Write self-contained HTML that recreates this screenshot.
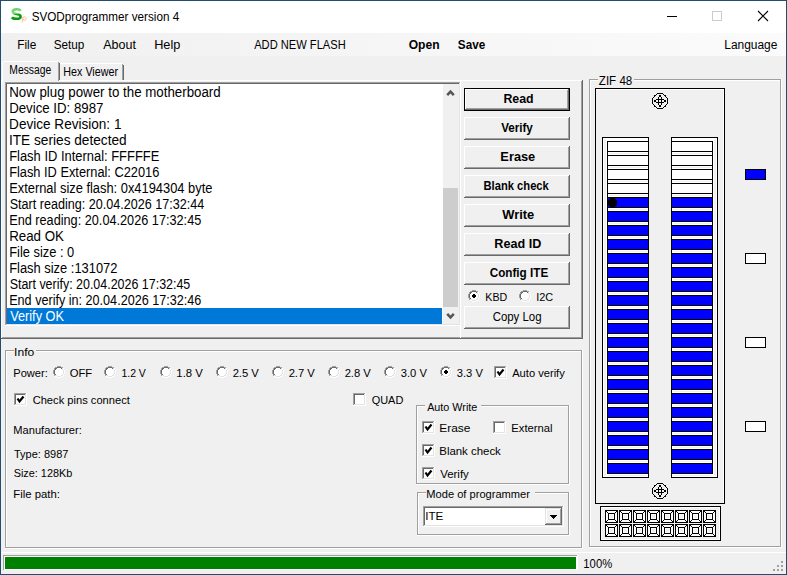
<!DOCTYPE html>
<html><head><meta charset="utf-8"><title>SVODprogrammer version 4</title><style>
html,body{margin:0;padding:0;background:#f0f0f0;overflow:hidden;width:787px;height:575px}
svg{display:block}
text{font-family:"Liberation Sans",sans-serif}
</style></head><body>
<svg width="787" height="575" viewBox="0 0 787 575" shape-rendering="crispEdges">
<rect x="0" y="0" width="787" height="575" fill="#f0f0f0" />
<rect x="0" y="0" width="787" height="33" fill="#ffffff" />
<defs><linearGradient id="mg" x1="0" x2="1" y1="0" y2="0"><stop offset="0" stop-color="#f0f0f0"/><stop offset="1" stop-color="#fbfbfb"/></linearGradient></defs>
<rect x="1" y="33" width="785" height="23" fill="url(#mg)" />
<rect x="0" y="0" width="787" height="1" fill="#1f4e6e" />
<rect x="0" y="574" width="787" height="1" fill="#1f4e6e" />
<rect x="0" y="0" width="1" height="575" fill="#1f4e6e" />
<rect x="786" y="0" width="1" height="575" fill="#1f4e6e" />
<defs><linearGradient id="sg" gradientUnits="userSpaceOnUse" x1="0" x2="0" y1="8" y2="20"><stop offset="0" stop-color="#66d166"/><stop offset="0.45" stop-color="#7fdc7f"/><stop offset="0.55" stop-color="#109a10"/><stop offset="1" stop-color="#0a9a0a"/></linearGradient></defs>
<path d="M20.7 10.9 C19.9 9.7 18.4 9.3 16.7 9.3 C14.1 9.3 12.6 10.2 12.8 11.8 C13 13.3 14.7 13.6 16.7 14 C19 14.4 20.8 14.9 20.6 16.8 C20.4 18.4 18.5 18.8 16.5 18.8 C14.3 18.8 12.7 18.4 11.9 17.2" stroke="url(#sg)" stroke-width="2.6" fill="none" shape-rendering="geometricPrecision"/>
<g shape-rendering="geometricPrecision" stroke="#f9c69a" stroke-width="1" fill="none"><path d="M23.2 16.8 L22.2 22.5"/><ellipse cx="24.4" cy="18.6" rx="1.7" ry="1.8"/></g>
<text x="31.67" y="21" font-size="12" font-weight="400" fill="#000" textLength="147.49" lengthAdjust="spacingAndGlyphs">SVODprogrammer version 4</text>
<rect x="667" y="16" width="10" height="1" fill="#000" />
<rect x="712.5" y="11.5" width="9" height="9" fill="none" stroke="#cccccc" stroke-width="1"/>
<path d="M758 11 L768 21 M768 11 L758 21" stroke="#000" stroke-width="1.1" fill="none" shape-rendering="geometricPrecision"/>
<text x="17.25" y="49" font-size="12" font-weight="400" fill="#000" textLength="19.10" lengthAdjust="spacingAndGlyphs">File</text>
<text x="53.67" y="49" font-size="12" font-weight="400" fill="#000" textLength="30.64" lengthAdjust="spacingAndGlyphs">Setup</text>
<text x="103.20" y="49" font-size="12" font-weight="400" fill="#000" textLength="32.70" lengthAdjust="spacingAndGlyphs">About</text>
<text x="154.18" y="49" font-size="12" font-weight="400" fill="#000" textLength="26.15" lengthAdjust="spacingAndGlyphs">Help</text>
<text x="254.20" y="49" font-size="12" font-weight="400" fill="#000" textLength="91.53" lengthAdjust="spacingAndGlyphs">ADD NEW FLASH</text>
<text x="724.25" y="49" font-size="12" font-weight="400" fill="#000" textLength="53.08" lengthAdjust="spacingAndGlyphs">Language</text>
<text x="408.72" y="49" font-size="12" font-weight="700" fill="#000" textLength="30.81" lengthAdjust="spacingAndGlyphs">Open</text>
<text x="457.85" y="49" font-size="12" font-weight="700" fill="#000" textLength="27.37" lengthAdjust="spacingAndGlyphs">Save</text>
<rect x="2" y="61" width="57" height="21" fill="#f0f0f0" />
<rect x="3" y="61" width="55" height="1" fill="#ffffff" />
<rect x="2" y="62" width="1" height="20" fill="#ffffff" />
<rect x="58" y="62" width="1" height="19" fill="#a0a0a0" />
<rect x="59" y="63" width="1" height="18" fill="#696969" />
<rect x="60" y="63" width="62" height="1" fill="#ffffff" />
<rect x="122" y="64" width="1" height="17" fill="#a0a0a0" />
<rect x="123" y="65" width="1" height="16" fill="#696969" />
<text x="9.37" y="74" font-size="12.5" font-weight="400" fill="#000" textLength="41.92" lengthAdjust="spacingAndGlyphs">Message</text>
<text x="63.34" y="76" font-size="12.5" font-weight="400" fill="#000" textLength="54.67" lengthAdjust="spacingAndGlyphs">Hex Viewer</text>
<rect x="59" y="80" width="524" height="1" fill="#ffffff" />
<rect x="1" y="80" width="1" height="259" fill="#ffffff" />
<rect x="1" y="338" width="582" height="1" fill="#696969" />
<rect x="2" y="337" width="580" height="1" fill="#a0a0a0" />
<rect x="5" y="82" width="456" height="244" fill="#ffffff" />
<rect x="5" y="82" width="455" height="1" fill="#a0a0a0" />
<rect x="5" y="82" width="1" height="243" fill="#a0a0a0" />
<rect x="6" y="83" width="453" height="1" fill="#696969" />
<rect x="6" y="83" width="1" height="241" fill="#696969" />
<rect x="5" y="325" width="456" height="1" fill="#ffffff" />
<rect x="460" y="82" width="1" height="244" fill="#ffffff" />
<rect x="6" y="324" width="454" height="1" fill="#e3e3e3" />
<rect x="459" y="83" width="1" height="242" fill="#e3e3e3" />
<rect x="443" y="84" width="16" height="240" fill="#f0f0f0" />
<rect x="443" y="188" width="15" height="119" fill="#cdcdcd" />
<path d="M447.2 95.2 L450.5 91.6 L453.8 95.2" stroke="#555555" stroke-width="2.5" fill="none" shape-rendering="geometricPrecision"/>
<path d="M447.2 313.8 L450.5 317.4 L453.8 313.8" stroke="#555555" stroke-width="2.5" fill="none" shape-rendering="geometricPrecision"/>
<rect x="7" y="308" width="435" height="16" fill="#0078d7" />
<text x="9.14" y="97" font-size="14" font-weight="400" fill="#000" textLength="211.57" lengthAdjust="spacingAndGlyphs">Now plug power to the motherboard</text>
<text x="9.14" y="113" font-size="14" font-weight="400" fill="#000" textLength="94.32" lengthAdjust="spacingAndGlyphs">Device ID: 8987</text>
<text x="9.12" y="129" font-size="14" font-weight="400" fill="#000" textLength="112.31" lengthAdjust="spacingAndGlyphs">Device Revision: 1</text>
<text x="8.97" y="145" font-size="14" font-weight="400" fill="#000" textLength="117.72" lengthAdjust="spacingAndGlyphs">ITE series detected</text>
<text x="9.17" y="161" font-size="14" font-weight="400" fill="#000" textLength="150.20" lengthAdjust="spacingAndGlyphs">Flash ID Internal: FFFFFE</text>
<text x="9.18" y="177" font-size="14" font-weight="400" fill="#000" textLength="150.18" lengthAdjust="spacingAndGlyphs">Flash ID External: C22016</text>
<text x="9.17" y="193" font-size="14" font-weight="400" fill="#000" textLength="203.25" lengthAdjust="spacingAndGlyphs">External size flash: 0x4194304 byte</text>
<text x="9.63" y="209" font-size="14" font-weight="400" fill="#000" textLength="194.57" lengthAdjust="spacingAndGlyphs">Start reading: 20.04.2026 17:32:44</text>
<text x="9.18" y="225" font-size="14" font-weight="400" fill="#000" textLength="192.12" lengthAdjust="spacingAndGlyphs">End reading: 20.04.2026 17:32:45</text>
<text x="9.13" y="241" font-size="14" font-weight="400" fill="#000" textLength="54.84" lengthAdjust="spacingAndGlyphs">Read OK</text>
<text x="9.17" y="257" font-size="14" font-weight="400" fill="#000" textLength="65.11" lengthAdjust="spacingAndGlyphs">File size : 0</text>
<text x="9.17" y="273" font-size="14" font-weight="400" fill="#000" textLength="108.27" lengthAdjust="spacingAndGlyphs">Flash size :131072</text>
<text x="9.64" y="289" font-size="14" font-weight="400" fill="#000" textLength="180.66" lengthAdjust="spacingAndGlyphs">Start verify: 20.04.2026 17:32:45</text>
<text x="9.19" y="305" font-size="14" font-weight="400" fill="#000" textLength="192.10" lengthAdjust="spacingAndGlyphs">End verify in: 20.04.2026 17:32:46</text>
<text x="10.14" y="321" font-size="14" font-weight="400" fill="#ffffff" textLength="53.84" lengthAdjust="spacingAndGlyphs">Verify OK</text>
<rect x="460" y="80" width="1" height="258" fill="#ffffff" />
<rect x="582" y="80" width="1" height="259" fill="#696969" />
<rect x="581" y="81" width="1" height="257" fill="#a0a0a0" />
<rect x="464" y="88" width="106" height="23" fill="#f0f0f0" />
<rect x="464.5" y="88.5" width="105" height="22" fill="none" stroke="#000"/>
<rect x="465" y="89" width="104" height="1" fill="#ffffff" />
<rect x="465" y="89" width="1" height="21" fill="#ffffff" />
<rect x="465" y="109" width="104" height="1" fill="#696969" />
<rect x="568" y="89" width="1" height="21" fill="#696969" />
<rect x="466" y="108" width="102" height="1" fill="#a0a0a0" />
<rect x="567" y="90" width="1" height="19" fill="#a0a0a0" />
<text x="503.40" y="103" font-size="12.5" font-weight="700" fill="#000" textLength="30.21" lengthAdjust="spacingAndGlyphs">Read</text>
<rect x="464" y="117" width="106" height="23" fill="#f0f0f0" />
<rect x="464" y="117" width="106" height="1" fill="#ffffff" />
<rect x="464" y="117" width="1" height="23" fill="#ffffff" />
<rect x="464" y="139" width="106" height="1" fill="#696969" />
<rect x="569" y="117" width="1" height="23" fill="#696969" />
<rect x="465" y="138" width="104" height="1" fill="#a0a0a0" />
<rect x="568" y="118" width="1" height="21" fill="#a0a0a0" />
<text x="501.14" y="132" font-size="12.5" font-weight="700" fill="#000" textLength="31.71" lengthAdjust="spacingAndGlyphs">Verify</text>
<rect x="464" y="146" width="106" height="23" fill="#f0f0f0" />
<rect x="464" y="146" width="106" height="1" fill="#ffffff" />
<rect x="464" y="146" width="1" height="23" fill="#ffffff" />
<rect x="464" y="168" width="106" height="1" fill="#696969" />
<rect x="569" y="146" width="1" height="23" fill="#696969" />
<rect x="465" y="167" width="104" height="1" fill="#a0a0a0" />
<rect x="568" y="147" width="1" height="21" fill="#a0a0a0" />
<text x="500.37" y="161" font-size="12.5" font-weight="700" fill="#000" textLength="34.88" lengthAdjust="spacingAndGlyphs">Erase</text>
<rect x="464" y="175" width="106" height="23" fill="#f0f0f0" />
<rect x="464" y="175" width="106" height="1" fill="#ffffff" />
<rect x="464" y="175" width="1" height="23" fill="#ffffff" />
<rect x="464" y="197" width="106" height="1" fill="#696969" />
<rect x="569" y="175" width="1" height="23" fill="#696969" />
<rect x="465" y="196" width="104" height="1" fill="#a0a0a0" />
<rect x="568" y="176" width="1" height="21" fill="#a0a0a0" />
<text x="483.47" y="190" font-size="12.5" font-weight="700" fill="#000" textLength="65.35" lengthAdjust="spacingAndGlyphs">Blank check</text>
<rect x="464" y="204" width="106" height="23" fill="#f0f0f0" />
<rect x="464" y="204" width="106" height="1" fill="#ffffff" />
<rect x="464" y="204" width="1" height="23" fill="#ffffff" />
<rect x="464" y="226" width="106" height="1" fill="#696969" />
<rect x="569" y="204" width="1" height="23" fill="#696969" />
<rect x="465" y="225" width="104" height="1" fill="#a0a0a0" />
<rect x="568" y="205" width="1" height="21" fill="#a0a0a0" />
<text x="502.20" y="219" font-size="12.5" font-weight="700" fill="#000" textLength="32.08" lengthAdjust="spacingAndGlyphs">Write</text>
<rect x="464" y="233" width="106" height="23" fill="#f0f0f0" />
<rect x="464" y="233" width="106" height="1" fill="#ffffff" />
<rect x="464" y="233" width="1" height="23" fill="#ffffff" />
<rect x="464" y="255" width="106" height="1" fill="#696969" />
<rect x="569" y="233" width="1" height="23" fill="#696969" />
<rect x="465" y="254" width="104" height="1" fill="#a0a0a0" />
<rect x="568" y="234" width="1" height="21" fill="#a0a0a0" />
<text x="494.38" y="248" font-size="12.5" font-weight="700" fill="#000" textLength="46.96" lengthAdjust="spacingAndGlyphs">Read ID</text>
<rect x="464" y="262" width="106" height="23" fill="#f0f0f0" />
<rect x="464" y="262" width="106" height="1" fill="#ffffff" />
<rect x="464" y="262" width="1" height="23" fill="#ffffff" />
<rect x="464" y="284" width="106" height="1" fill="#696969" />
<rect x="569" y="262" width="1" height="23" fill="#696969" />
<rect x="465" y="283" width="104" height="1" fill="#a0a0a0" />
<rect x="568" y="263" width="1" height="21" fill="#a0a0a0" />
<text x="489.73" y="277" font-size="12.5" font-weight="700" fill="#000" textLength="58.53" lengthAdjust="spacingAndGlyphs">Config ITE</text>
<rect x="464" y="306" width="106" height="23" fill="#f0f0f0" />
<rect x="464" y="306" width="106" height="1" fill="#ffffff" />
<rect x="464" y="306" width="1" height="23" fill="#ffffff" />
<rect x="464" y="328" width="106" height="1" fill="#696969" />
<rect x="569" y="306" width="1" height="23" fill="#696969" />
<rect x="465" y="327" width="104" height="1" fill="#a0a0a0" />
<rect x="568" y="307" width="1" height="21" fill="#a0a0a0" />
<text x="492.63" y="321" font-size="12.5" font-weight="400" fill="#000" textLength="48.92" lengthAdjust="spacingAndGlyphs">Copy Log</text>
<path d="M472 290h1v1h-1zM473 290h1v1h-1zM474 290h1v1h-1zM475 290h1v1h-1zM470 291h1v1h-1zM471 291h1v1h-1zM476 291h1v1h-1zM477 291h1v1h-1zM469 292h1v1h-1zM469 293h1v1h-1zM468 294h1v1h-1zM468 295h1v1h-1zM468 296h1v1h-1zM468 297h1v1h-1zM469 298h1v1h-1zM469 299h1v1h-1z" fill="#a0a0a0"/>
<path d="M472 292h1v1h-1zM473 292h1v1h-1zM474 292h1v1h-1zM475 292h1v1h-1zM471 293h1v1h-1zM472 293h1v1h-1zM473 293h1v1h-1zM474 293h1v1h-1zM475 293h1v1h-1zM476 293h1v1h-1zM470 294h1v1h-1zM471 294h1v1h-1zM472 294h1v1h-1zM473 294h1v1h-1zM474 294h1v1h-1zM475 294h1v1h-1zM476 294h1v1h-1zM477 294h1v1h-1zM470 295h1v1h-1zM471 295h1v1h-1zM472 295h1v1h-1zM473 295h1v1h-1zM474 295h1v1h-1zM475 295h1v1h-1zM476 295h1v1h-1zM477 295h1v1h-1zM470 296h1v1h-1zM471 296h1v1h-1zM472 296h1v1h-1zM473 296h1v1h-1zM474 296h1v1h-1zM475 296h1v1h-1zM476 296h1v1h-1zM477 296h1v1h-1zM470 297h1v1h-1zM471 297h1v1h-1zM472 297h1v1h-1zM473 297h1v1h-1zM474 297h1v1h-1zM475 297h1v1h-1zM476 297h1v1h-1zM477 297h1v1h-1zM471 298h1v1h-1zM472 298h1v1h-1zM473 298h1v1h-1zM474 298h1v1h-1zM475 298h1v1h-1zM476 298h1v1h-1zM472 299h1v1h-1zM473 299h1v1h-1zM474 299h1v1h-1zM475 299h1v1h-1zM478 292h1v1h-1zM478 293h1v1h-1zM479 294h1v1h-1zM479 295h1v1h-1zM479 296h1v1h-1zM479 297h1v1h-1zM478 298h1v1h-1zM478 299h1v1h-1zM470 300h1v1h-1zM471 300h1v1h-1zM476 300h1v1h-1zM477 300h1v1h-1zM472 301h1v1h-1zM473 301h1v1h-1zM474 301h1v1h-1zM475 301h1v1h-1z" fill="#ffffff"/>
<path d="M472 291h1v1h-1zM473 291h1v1h-1zM474 291h1v1h-1zM475 291h1v1h-1zM470 292h1v1h-1zM471 292h1v1h-1zM476 292h1v1h-1zM470 293h1v1h-1zM469 294h1v1h-1zM469 295h1v1h-1zM469 296h1v1h-1zM469 297h1v1h-1zM470 298h1v1h-1z" fill="#696969"/>
<path d="M477 292h1v1h-1zM477 293h1v1h-1zM478 294h1v1h-1zM478 295h1v1h-1zM478 296h1v1h-1zM478 297h1v1h-1zM477 298h1v1h-1zM470 299h1v1h-1zM471 299h1v1h-1zM476 299h1v1h-1zM477 299h1v1h-1zM472 300h1v1h-1zM473 300h1v1h-1zM474 300h1v1h-1zM475 300h1v1h-1z" fill="#e3e3e3"/>
<path d="M473 294h1v1h-1zM474 294h1v1h-1zM472 295h1v1h-1zM473 295h1v1h-1zM474 295h1v1h-1zM475 295h1v1h-1zM472 296h1v1h-1zM473 296h1v1h-1zM474 296h1v1h-1zM475 296h1v1h-1zM473 297h1v1h-1zM474 297h1v1h-1z" fill="#000"/>
<text x="485.35" y="301" font-size="11.5" font-weight="400" fill="#000" textLength="21.95" lengthAdjust="spacingAndGlyphs">KBD</text>
<path d="M523 290h1v1h-1zM524 290h1v1h-1zM525 290h1v1h-1zM526 290h1v1h-1zM521 291h1v1h-1zM522 291h1v1h-1zM527 291h1v1h-1zM528 291h1v1h-1zM520 292h1v1h-1zM520 293h1v1h-1zM519 294h1v1h-1zM519 295h1v1h-1zM519 296h1v1h-1zM519 297h1v1h-1zM520 298h1v1h-1zM520 299h1v1h-1z" fill="#a0a0a0"/>
<path d="M523 292h1v1h-1zM524 292h1v1h-1zM525 292h1v1h-1zM526 292h1v1h-1zM522 293h1v1h-1zM523 293h1v1h-1zM524 293h1v1h-1zM525 293h1v1h-1zM526 293h1v1h-1zM527 293h1v1h-1zM521 294h1v1h-1zM522 294h1v1h-1zM523 294h1v1h-1zM524 294h1v1h-1zM525 294h1v1h-1zM526 294h1v1h-1zM527 294h1v1h-1zM528 294h1v1h-1zM521 295h1v1h-1zM522 295h1v1h-1zM523 295h1v1h-1zM524 295h1v1h-1zM525 295h1v1h-1zM526 295h1v1h-1zM527 295h1v1h-1zM528 295h1v1h-1zM521 296h1v1h-1zM522 296h1v1h-1zM523 296h1v1h-1zM524 296h1v1h-1zM525 296h1v1h-1zM526 296h1v1h-1zM527 296h1v1h-1zM528 296h1v1h-1zM521 297h1v1h-1zM522 297h1v1h-1zM523 297h1v1h-1zM524 297h1v1h-1zM525 297h1v1h-1zM526 297h1v1h-1zM527 297h1v1h-1zM528 297h1v1h-1zM522 298h1v1h-1zM523 298h1v1h-1zM524 298h1v1h-1zM525 298h1v1h-1zM526 298h1v1h-1zM527 298h1v1h-1zM523 299h1v1h-1zM524 299h1v1h-1zM525 299h1v1h-1zM526 299h1v1h-1zM529 292h1v1h-1zM529 293h1v1h-1zM530 294h1v1h-1zM530 295h1v1h-1zM530 296h1v1h-1zM530 297h1v1h-1zM529 298h1v1h-1zM529 299h1v1h-1zM521 300h1v1h-1zM522 300h1v1h-1zM527 300h1v1h-1zM528 300h1v1h-1zM523 301h1v1h-1zM524 301h1v1h-1zM525 301h1v1h-1zM526 301h1v1h-1z" fill="#ffffff"/>
<path d="M523 291h1v1h-1zM524 291h1v1h-1zM525 291h1v1h-1zM526 291h1v1h-1zM521 292h1v1h-1zM522 292h1v1h-1zM527 292h1v1h-1zM521 293h1v1h-1zM520 294h1v1h-1zM520 295h1v1h-1zM520 296h1v1h-1zM520 297h1v1h-1zM521 298h1v1h-1z" fill="#696969"/>
<path d="M528 292h1v1h-1zM528 293h1v1h-1zM529 294h1v1h-1zM529 295h1v1h-1zM529 296h1v1h-1zM529 297h1v1h-1zM528 298h1v1h-1zM521 299h1v1h-1zM522 299h1v1h-1zM527 299h1v1h-1zM528 299h1v1h-1zM523 300h1v1h-1zM524 300h1v1h-1zM525 300h1v1h-1zM526 300h1v1h-1z" fill="#e3e3e3"/>
<text x="536.22" y="301" font-size="11.5" font-weight="400" fill="#000" textLength="16.98" lengthAdjust="spacingAndGlyphs">I2C</text>
<rect x="5" y="350" width="577" height="1" fill="#a0a0a0" />
<rect x="6" y="351" width="575" height="1" fill="#ffffff" />
<rect x="5" y="350" width="1" height="198" fill="#a0a0a0" />
<rect x="6" y="351" width="1" height="196" fill="#ffffff" />
<rect x="5" y="547" width="577" height="1" fill="#a0a0a0" />
<rect x="5" y="548" width="578" height="1" fill="#ffffff" />
<rect x="581" y="350" width="1" height="198" fill="#a0a0a0" />
<rect x="582" y="350" width="1" height="199" fill="#ffffff" />
<rect x="14" y="347" width="22" height="6" fill="#f0f0f0" />
<text x="14.11" y="356" font-size="11.5" font-weight="400" fill="#000" textLength="20.21" lengthAdjust="spacingAndGlyphs">Info</text>
<text x="13.31" y="377" font-size="11.5" font-weight="400" fill="#000" textLength="34.51" lengthAdjust="spacingAndGlyphs">Power:</text>
<path d="M57 366h1v1h-1zM58 366h1v1h-1zM59 366h1v1h-1zM60 366h1v1h-1zM55 367h1v1h-1zM56 367h1v1h-1zM61 367h1v1h-1zM62 367h1v1h-1zM54 368h1v1h-1zM54 369h1v1h-1zM53 370h1v1h-1zM53 371h1v1h-1zM53 372h1v1h-1zM53 373h1v1h-1zM54 374h1v1h-1zM54 375h1v1h-1z" fill="#a0a0a0"/>
<path d="M57 368h1v1h-1zM58 368h1v1h-1zM59 368h1v1h-1zM60 368h1v1h-1zM56 369h1v1h-1zM57 369h1v1h-1zM58 369h1v1h-1zM59 369h1v1h-1zM60 369h1v1h-1zM61 369h1v1h-1zM55 370h1v1h-1zM56 370h1v1h-1zM57 370h1v1h-1zM58 370h1v1h-1zM59 370h1v1h-1zM60 370h1v1h-1zM61 370h1v1h-1zM62 370h1v1h-1zM55 371h1v1h-1zM56 371h1v1h-1zM57 371h1v1h-1zM58 371h1v1h-1zM59 371h1v1h-1zM60 371h1v1h-1zM61 371h1v1h-1zM62 371h1v1h-1zM55 372h1v1h-1zM56 372h1v1h-1zM57 372h1v1h-1zM58 372h1v1h-1zM59 372h1v1h-1zM60 372h1v1h-1zM61 372h1v1h-1zM62 372h1v1h-1zM55 373h1v1h-1zM56 373h1v1h-1zM57 373h1v1h-1zM58 373h1v1h-1zM59 373h1v1h-1zM60 373h1v1h-1zM61 373h1v1h-1zM62 373h1v1h-1zM56 374h1v1h-1zM57 374h1v1h-1zM58 374h1v1h-1zM59 374h1v1h-1zM60 374h1v1h-1zM61 374h1v1h-1zM57 375h1v1h-1zM58 375h1v1h-1zM59 375h1v1h-1zM60 375h1v1h-1zM63 368h1v1h-1zM63 369h1v1h-1zM64 370h1v1h-1zM64 371h1v1h-1zM64 372h1v1h-1zM64 373h1v1h-1zM63 374h1v1h-1zM63 375h1v1h-1zM55 376h1v1h-1zM56 376h1v1h-1zM61 376h1v1h-1zM62 376h1v1h-1zM57 377h1v1h-1zM58 377h1v1h-1zM59 377h1v1h-1zM60 377h1v1h-1z" fill="#ffffff"/>
<path d="M57 367h1v1h-1zM58 367h1v1h-1zM59 367h1v1h-1zM60 367h1v1h-1zM55 368h1v1h-1zM56 368h1v1h-1zM61 368h1v1h-1zM55 369h1v1h-1zM54 370h1v1h-1zM54 371h1v1h-1zM54 372h1v1h-1zM54 373h1v1h-1zM55 374h1v1h-1z" fill="#696969"/>
<path d="M62 368h1v1h-1zM62 369h1v1h-1zM63 370h1v1h-1zM63 371h1v1h-1zM63 372h1v1h-1zM63 373h1v1h-1zM62 374h1v1h-1zM55 375h1v1h-1zM56 375h1v1h-1zM61 375h1v1h-1zM62 375h1v1h-1zM57 376h1v1h-1zM58 376h1v1h-1zM59 376h1v1h-1zM60 376h1v1h-1z" fill="#e3e3e3"/>
<text x="69.69" y="377" font-size="11.5" font-weight="400" fill="#000" textLength="22.55" lengthAdjust="spacingAndGlyphs">OFF</text>
<path d="M108 366h1v1h-1zM109 366h1v1h-1zM110 366h1v1h-1zM111 366h1v1h-1zM106 367h1v1h-1zM107 367h1v1h-1zM112 367h1v1h-1zM113 367h1v1h-1zM105 368h1v1h-1zM105 369h1v1h-1zM104 370h1v1h-1zM104 371h1v1h-1zM104 372h1v1h-1zM104 373h1v1h-1zM105 374h1v1h-1zM105 375h1v1h-1z" fill="#a0a0a0"/>
<path d="M108 368h1v1h-1zM109 368h1v1h-1zM110 368h1v1h-1zM111 368h1v1h-1zM107 369h1v1h-1zM108 369h1v1h-1zM109 369h1v1h-1zM110 369h1v1h-1zM111 369h1v1h-1zM112 369h1v1h-1zM106 370h1v1h-1zM107 370h1v1h-1zM108 370h1v1h-1zM109 370h1v1h-1zM110 370h1v1h-1zM111 370h1v1h-1zM112 370h1v1h-1zM113 370h1v1h-1zM106 371h1v1h-1zM107 371h1v1h-1zM108 371h1v1h-1zM109 371h1v1h-1zM110 371h1v1h-1zM111 371h1v1h-1zM112 371h1v1h-1zM113 371h1v1h-1zM106 372h1v1h-1zM107 372h1v1h-1zM108 372h1v1h-1zM109 372h1v1h-1zM110 372h1v1h-1zM111 372h1v1h-1zM112 372h1v1h-1zM113 372h1v1h-1zM106 373h1v1h-1zM107 373h1v1h-1zM108 373h1v1h-1zM109 373h1v1h-1zM110 373h1v1h-1zM111 373h1v1h-1zM112 373h1v1h-1zM113 373h1v1h-1zM107 374h1v1h-1zM108 374h1v1h-1zM109 374h1v1h-1zM110 374h1v1h-1zM111 374h1v1h-1zM112 374h1v1h-1zM108 375h1v1h-1zM109 375h1v1h-1zM110 375h1v1h-1zM111 375h1v1h-1zM114 368h1v1h-1zM114 369h1v1h-1zM115 370h1v1h-1zM115 371h1v1h-1zM115 372h1v1h-1zM115 373h1v1h-1zM114 374h1v1h-1zM114 375h1v1h-1zM106 376h1v1h-1zM107 376h1v1h-1zM112 376h1v1h-1zM113 376h1v1h-1zM108 377h1v1h-1zM109 377h1v1h-1zM110 377h1v1h-1zM111 377h1v1h-1z" fill="#ffffff"/>
<path d="M108 367h1v1h-1zM109 367h1v1h-1zM110 367h1v1h-1zM111 367h1v1h-1zM106 368h1v1h-1zM107 368h1v1h-1zM112 368h1v1h-1zM106 369h1v1h-1zM105 370h1v1h-1zM105 371h1v1h-1zM105 372h1v1h-1zM105 373h1v1h-1zM106 374h1v1h-1z" fill="#696969"/>
<path d="M113 368h1v1h-1zM113 369h1v1h-1zM114 370h1v1h-1zM114 371h1v1h-1zM114 372h1v1h-1zM114 373h1v1h-1zM113 374h1v1h-1zM106 375h1v1h-1zM107 375h1v1h-1zM112 375h1v1h-1zM113 375h1v1h-1zM108 376h1v1h-1zM109 376h1v1h-1zM110 376h1v1h-1zM111 376h1v1h-1z" fill="#e3e3e3"/>
<text x="121.42" y="377" font-size="11.5" font-weight="400" fill="#000" textLength="24.44" lengthAdjust="spacingAndGlyphs">1.2 V</text>
<path d="M164 366h1v1h-1zM165 366h1v1h-1zM166 366h1v1h-1zM167 366h1v1h-1zM162 367h1v1h-1zM163 367h1v1h-1zM168 367h1v1h-1zM169 367h1v1h-1zM161 368h1v1h-1zM161 369h1v1h-1zM160 370h1v1h-1zM160 371h1v1h-1zM160 372h1v1h-1zM160 373h1v1h-1zM161 374h1v1h-1zM161 375h1v1h-1z" fill="#a0a0a0"/>
<path d="M164 368h1v1h-1zM165 368h1v1h-1zM166 368h1v1h-1zM167 368h1v1h-1zM163 369h1v1h-1zM164 369h1v1h-1zM165 369h1v1h-1zM166 369h1v1h-1zM167 369h1v1h-1zM168 369h1v1h-1zM162 370h1v1h-1zM163 370h1v1h-1zM164 370h1v1h-1zM165 370h1v1h-1zM166 370h1v1h-1zM167 370h1v1h-1zM168 370h1v1h-1zM169 370h1v1h-1zM162 371h1v1h-1zM163 371h1v1h-1zM164 371h1v1h-1zM165 371h1v1h-1zM166 371h1v1h-1zM167 371h1v1h-1zM168 371h1v1h-1zM169 371h1v1h-1zM162 372h1v1h-1zM163 372h1v1h-1zM164 372h1v1h-1zM165 372h1v1h-1zM166 372h1v1h-1zM167 372h1v1h-1zM168 372h1v1h-1zM169 372h1v1h-1zM162 373h1v1h-1zM163 373h1v1h-1zM164 373h1v1h-1zM165 373h1v1h-1zM166 373h1v1h-1zM167 373h1v1h-1zM168 373h1v1h-1zM169 373h1v1h-1zM163 374h1v1h-1zM164 374h1v1h-1zM165 374h1v1h-1zM166 374h1v1h-1zM167 374h1v1h-1zM168 374h1v1h-1zM164 375h1v1h-1zM165 375h1v1h-1zM166 375h1v1h-1zM167 375h1v1h-1zM170 368h1v1h-1zM170 369h1v1h-1zM171 370h1v1h-1zM171 371h1v1h-1zM171 372h1v1h-1zM171 373h1v1h-1zM170 374h1v1h-1zM170 375h1v1h-1zM162 376h1v1h-1zM163 376h1v1h-1zM168 376h1v1h-1zM169 376h1v1h-1zM164 377h1v1h-1zM165 377h1v1h-1zM166 377h1v1h-1zM167 377h1v1h-1z" fill="#ffffff"/>
<path d="M164 367h1v1h-1zM165 367h1v1h-1zM166 367h1v1h-1zM167 367h1v1h-1zM162 368h1v1h-1zM163 368h1v1h-1zM168 368h1v1h-1zM162 369h1v1h-1zM161 370h1v1h-1zM161 371h1v1h-1zM161 372h1v1h-1zM161 373h1v1h-1zM162 374h1v1h-1z" fill="#696969"/>
<path d="M169 368h1v1h-1zM169 369h1v1h-1zM170 370h1v1h-1zM170 371h1v1h-1zM170 372h1v1h-1zM170 373h1v1h-1zM169 374h1v1h-1zM162 375h1v1h-1zM163 375h1v1h-1zM168 375h1v1h-1zM169 375h1v1h-1zM164 376h1v1h-1zM165 376h1v1h-1zM166 376h1v1h-1zM167 376h1v1h-1z" fill="#e3e3e3"/>
<text x="176.35" y="377" font-size="11.5" font-weight="400" fill="#000" textLength="26.51" lengthAdjust="spacingAndGlyphs">1.8 V</text>
<path d="M220 366h1v1h-1zM221 366h1v1h-1zM222 366h1v1h-1zM223 366h1v1h-1zM218 367h1v1h-1zM219 367h1v1h-1zM224 367h1v1h-1zM225 367h1v1h-1zM217 368h1v1h-1zM217 369h1v1h-1zM216 370h1v1h-1zM216 371h1v1h-1zM216 372h1v1h-1zM216 373h1v1h-1zM217 374h1v1h-1zM217 375h1v1h-1z" fill="#a0a0a0"/>
<path d="M220 368h1v1h-1zM221 368h1v1h-1zM222 368h1v1h-1zM223 368h1v1h-1zM219 369h1v1h-1zM220 369h1v1h-1zM221 369h1v1h-1zM222 369h1v1h-1zM223 369h1v1h-1zM224 369h1v1h-1zM218 370h1v1h-1zM219 370h1v1h-1zM220 370h1v1h-1zM221 370h1v1h-1zM222 370h1v1h-1zM223 370h1v1h-1zM224 370h1v1h-1zM225 370h1v1h-1zM218 371h1v1h-1zM219 371h1v1h-1zM220 371h1v1h-1zM221 371h1v1h-1zM222 371h1v1h-1zM223 371h1v1h-1zM224 371h1v1h-1zM225 371h1v1h-1zM218 372h1v1h-1zM219 372h1v1h-1zM220 372h1v1h-1zM221 372h1v1h-1zM222 372h1v1h-1zM223 372h1v1h-1zM224 372h1v1h-1zM225 372h1v1h-1zM218 373h1v1h-1zM219 373h1v1h-1zM220 373h1v1h-1zM221 373h1v1h-1zM222 373h1v1h-1zM223 373h1v1h-1zM224 373h1v1h-1zM225 373h1v1h-1zM219 374h1v1h-1zM220 374h1v1h-1zM221 374h1v1h-1zM222 374h1v1h-1zM223 374h1v1h-1zM224 374h1v1h-1zM220 375h1v1h-1zM221 375h1v1h-1zM222 375h1v1h-1zM223 375h1v1h-1zM226 368h1v1h-1zM226 369h1v1h-1zM227 370h1v1h-1zM227 371h1v1h-1zM227 372h1v1h-1zM227 373h1v1h-1zM226 374h1v1h-1zM226 375h1v1h-1zM218 376h1v1h-1zM219 376h1v1h-1zM224 376h1v1h-1zM225 376h1v1h-1zM220 377h1v1h-1zM221 377h1v1h-1zM222 377h1v1h-1zM223 377h1v1h-1z" fill="#ffffff"/>
<path d="M220 367h1v1h-1zM221 367h1v1h-1zM222 367h1v1h-1zM223 367h1v1h-1zM218 368h1v1h-1zM219 368h1v1h-1zM224 368h1v1h-1zM218 369h1v1h-1zM217 370h1v1h-1zM217 371h1v1h-1zM217 372h1v1h-1zM217 373h1v1h-1zM218 374h1v1h-1z" fill="#696969"/>
<path d="M225 368h1v1h-1zM225 369h1v1h-1zM226 370h1v1h-1zM226 371h1v1h-1zM226 372h1v1h-1zM226 373h1v1h-1zM225 374h1v1h-1zM218 375h1v1h-1zM219 375h1v1h-1zM224 375h1v1h-1zM225 375h1v1h-1zM220 376h1v1h-1zM221 376h1v1h-1zM222 376h1v1h-1zM223 376h1v1h-1z" fill="#e3e3e3"/>
<text x="232.64" y="377" font-size="11.5" font-weight="400" fill="#000" textLength="26.22" lengthAdjust="spacingAndGlyphs">2.5 V</text>
<path d="M276 366h1v1h-1zM277 366h1v1h-1zM278 366h1v1h-1zM279 366h1v1h-1zM274 367h1v1h-1zM275 367h1v1h-1zM280 367h1v1h-1zM281 367h1v1h-1zM273 368h1v1h-1zM273 369h1v1h-1zM272 370h1v1h-1zM272 371h1v1h-1zM272 372h1v1h-1zM272 373h1v1h-1zM273 374h1v1h-1zM273 375h1v1h-1z" fill="#a0a0a0"/>
<path d="M276 368h1v1h-1zM277 368h1v1h-1zM278 368h1v1h-1zM279 368h1v1h-1zM275 369h1v1h-1zM276 369h1v1h-1zM277 369h1v1h-1zM278 369h1v1h-1zM279 369h1v1h-1zM280 369h1v1h-1zM274 370h1v1h-1zM275 370h1v1h-1zM276 370h1v1h-1zM277 370h1v1h-1zM278 370h1v1h-1zM279 370h1v1h-1zM280 370h1v1h-1zM281 370h1v1h-1zM274 371h1v1h-1zM275 371h1v1h-1zM276 371h1v1h-1zM277 371h1v1h-1zM278 371h1v1h-1zM279 371h1v1h-1zM280 371h1v1h-1zM281 371h1v1h-1zM274 372h1v1h-1zM275 372h1v1h-1zM276 372h1v1h-1zM277 372h1v1h-1zM278 372h1v1h-1zM279 372h1v1h-1zM280 372h1v1h-1zM281 372h1v1h-1zM274 373h1v1h-1zM275 373h1v1h-1zM276 373h1v1h-1zM277 373h1v1h-1zM278 373h1v1h-1zM279 373h1v1h-1zM280 373h1v1h-1zM281 373h1v1h-1zM275 374h1v1h-1zM276 374h1v1h-1zM277 374h1v1h-1zM278 374h1v1h-1zM279 374h1v1h-1zM280 374h1v1h-1zM276 375h1v1h-1zM277 375h1v1h-1zM278 375h1v1h-1zM279 375h1v1h-1zM282 368h1v1h-1zM282 369h1v1h-1zM283 370h1v1h-1zM283 371h1v1h-1zM283 372h1v1h-1zM283 373h1v1h-1zM282 374h1v1h-1zM282 375h1v1h-1zM274 376h1v1h-1zM275 376h1v1h-1zM280 376h1v1h-1zM281 376h1v1h-1zM276 377h1v1h-1zM277 377h1v1h-1zM278 377h1v1h-1zM279 377h1v1h-1z" fill="#ffffff"/>
<path d="M276 367h1v1h-1zM277 367h1v1h-1zM278 367h1v1h-1zM279 367h1v1h-1zM274 368h1v1h-1zM275 368h1v1h-1zM280 368h1v1h-1zM274 369h1v1h-1zM273 370h1v1h-1zM273 371h1v1h-1zM273 372h1v1h-1zM273 373h1v1h-1zM274 374h1v1h-1z" fill="#696969"/>
<path d="M281 368h1v1h-1zM281 369h1v1h-1zM282 370h1v1h-1zM282 371h1v1h-1zM282 372h1v1h-1zM282 373h1v1h-1zM281 374h1v1h-1zM274 375h1v1h-1zM275 375h1v1h-1zM280 375h1v1h-1zM281 375h1v1h-1zM276 376h1v1h-1zM277 376h1v1h-1zM278 376h1v1h-1zM279 376h1v1h-1z" fill="#e3e3e3"/>
<text x="288.64" y="377" font-size="11.5" font-weight="400" fill="#000" textLength="26.22" lengthAdjust="spacingAndGlyphs">2.7 V</text>
<path d="M332 366h1v1h-1zM333 366h1v1h-1zM334 366h1v1h-1zM335 366h1v1h-1zM330 367h1v1h-1zM331 367h1v1h-1zM336 367h1v1h-1zM337 367h1v1h-1zM329 368h1v1h-1zM329 369h1v1h-1zM328 370h1v1h-1zM328 371h1v1h-1zM328 372h1v1h-1zM328 373h1v1h-1zM329 374h1v1h-1zM329 375h1v1h-1z" fill="#a0a0a0"/>
<path d="M332 368h1v1h-1zM333 368h1v1h-1zM334 368h1v1h-1zM335 368h1v1h-1zM331 369h1v1h-1zM332 369h1v1h-1zM333 369h1v1h-1zM334 369h1v1h-1zM335 369h1v1h-1zM336 369h1v1h-1zM330 370h1v1h-1zM331 370h1v1h-1zM332 370h1v1h-1zM333 370h1v1h-1zM334 370h1v1h-1zM335 370h1v1h-1zM336 370h1v1h-1zM337 370h1v1h-1zM330 371h1v1h-1zM331 371h1v1h-1zM332 371h1v1h-1zM333 371h1v1h-1zM334 371h1v1h-1zM335 371h1v1h-1zM336 371h1v1h-1zM337 371h1v1h-1zM330 372h1v1h-1zM331 372h1v1h-1zM332 372h1v1h-1zM333 372h1v1h-1zM334 372h1v1h-1zM335 372h1v1h-1zM336 372h1v1h-1zM337 372h1v1h-1zM330 373h1v1h-1zM331 373h1v1h-1zM332 373h1v1h-1zM333 373h1v1h-1zM334 373h1v1h-1zM335 373h1v1h-1zM336 373h1v1h-1zM337 373h1v1h-1zM331 374h1v1h-1zM332 374h1v1h-1zM333 374h1v1h-1zM334 374h1v1h-1zM335 374h1v1h-1zM336 374h1v1h-1zM332 375h1v1h-1zM333 375h1v1h-1zM334 375h1v1h-1zM335 375h1v1h-1zM338 368h1v1h-1zM338 369h1v1h-1zM339 370h1v1h-1zM339 371h1v1h-1zM339 372h1v1h-1zM339 373h1v1h-1zM338 374h1v1h-1zM338 375h1v1h-1zM330 376h1v1h-1zM331 376h1v1h-1zM336 376h1v1h-1zM337 376h1v1h-1zM332 377h1v1h-1zM333 377h1v1h-1zM334 377h1v1h-1zM335 377h1v1h-1z" fill="#ffffff"/>
<path d="M332 367h1v1h-1zM333 367h1v1h-1zM334 367h1v1h-1zM335 367h1v1h-1zM330 368h1v1h-1zM331 368h1v1h-1zM336 368h1v1h-1zM330 369h1v1h-1zM329 370h1v1h-1zM329 371h1v1h-1zM329 372h1v1h-1zM329 373h1v1h-1zM330 374h1v1h-1z" fill="#696969"/>
<path d="M337 368h1v1h-1zM337 369h1v1h-1zM338 370h1v1h-1zM338 371h1v1h-1zM338 372h1v1h-1zM338 373h1v1h-1zM337 374h1v1h-1zM330 375h1v1h-1zM331 375h1v1h-1zM336 375h1v1h-1zM337 375h1v1h-1zM332 376h1v1h-1zM333 376h1v1h-1zM334 376h1v1h-1zM335 376h1v1h-1z" fill="#e3e3e3"/>
<text x="344.64" y="377" font-size="11.5" font-weight="400" fill="#000" textLength="26.22" lengthAdjust="spacingAndGlyphs">2.8 V</text>
<path d="M388 366h1v1h-1zM389 366h1v1h-1zM390 366h1v1h-1zM391 366h1v1h-1zM386 367h1v1h-1zM387 367h1v1h-1zM392 367h1v1h-1zM393 367h1v1h-1zM385 368h1v1h-1zM385 369h1v1h-1zM384 370h1v1h-1zM384 371h1v1h-1zM384 372h1v1h-1zM384 373h1v1h-1zM385 374h1v1h-1zM385 375h1v1h-1z" fill="#a0a0a0"/>
<path d="M388 368h1v1h-1zM389 368h1v1h-1zM390 368h1v1h-1zM391 368h1v1h-1zM387 369h1v1h-1zM388 369h1v1h-1zM389 369h1v1h-1zM390 369h1v1h-1zM391 369h1v1h-1zM392 369h1v1h-1zM386 370h1v1h-1zM387 370h1v1h-1zM388 370h1v1h-1zM389 370h1v1h-1zM390 370h1v1h-1zM391 370h1v1h-1zM392 370h1v1h-1zM393 370h1v1h-1zM386 371h1v1h-1zM387 371h1v1h-1zM388 371h1v1h-1zM389 371h1v1h-1zM390 371h1v1h-1zM391 371h1v1h-1zM392 371h1v1h-1zM393 371h1v1h-1zM386 372h1v1h-1zM387 372h1v1h-1zM388 372h1v1h-1zM389 372h1v1h-1zM390 372h1v1h-1zM391 372h1v1h-1zM392 372h1v1h-1zM393 372h1v1h-1zM386 373h1v1h-1zM387 373h1v1h-1zM388 373h1v1h-1zM389 373h1v1h-1zM390 373h1v1h-1zM391 373h1v1h-1zM392 373h1v1h-1zM393 373h1v1h-1zM387 374h1v1h-1zM388 374h1v1h-1zM389 374h1v1h-1zM390 374h1v1h-1zM391 374h1v1h-1zM392 374h1v1h-1zM388 375h1v1h-1zM389 375h1v1h-1zM390 375h1v1h-1zM391 375h1v1h-1zM394 368h1v1h-1zM394 369h1v1h-1zM395 370h1v1h-1zM395 371h1v1h-1zM395 372h1v1h-1zM395 373h1v1h-1zM394 374h1v1h-1zM394 375h1v1h-1zM386 376h1v1h-1zM387 376h1v1h-1zM392 376h1v1h-1zM393 376h1v1h-1zM388 377h1v1h-1zM389 377h1v1h-1zM390 377h1v1h-1zM391 377h1v1h-1z" fill="#ffffff"/>
<path d="M388 367h1v1h-1zM389 367h1v1h-1zM390 367h1v1h-1zM391 367h1v1h-1zM386 368h1v1h-1zM387 368h1v1h-1zM392 368h1v1h-1zM386 369h1v1h-1zM385 370h1v1h-1zM385 371h1v1h-1zM385 372h1v1h-1zM385 373h1v1h-1zM386 374h1v1h-1z" fill="#696969"/>
<path d="M393 368h1v1h-1zM393 369h1v1h-1zM394 370h1v1h-1zM394 371h1v1h-1zM394 372h1v1h-1zM394 373h1v1h-1zM393 374h1v1h-1zM386 375h1v1h-1zM387 375h1v1h-1zM392 375h1v1h-1zM393 375h1v1h-1zM388 376h1v1h-1zM389 376h1v1h-1zM390 376h1v1h-1zM391 376h1v1h-1z" fill="#e3e3e3"/>
<text x="400.75" y="377" font-size="11.5" font-weight="400" fill="#000" textLength="26.10" lengthAdjust="spacingAndGlyphs">3.0 V</text>
<path d="M444 366h1v1h-1zM445 366h1v1h-1zM446 366h1v1h-1zM447 366h1v1h-1zM442 367h1v1h-1zM443 367h1v1h-1zM448 367h1v1h-1zM449 367h1v1h-1zM441 368h1v1h-1zM441 369h1v1h-1zM440 370h1v1h-1zM440 371h1v1h-1zM440 372h1v1h-1zM440 373h1v1h-1zM441 374h1v1h-1zM441 375h1v1h-1z" fill="#a0a0a0"/>
<path d="M444 368h1v1h-1zM445 368h1v1h-1zM446 368h1v1h-1zM447 368h1v1h-1zM443 369h1v1h-1zM444 369h1v1h-1zM445 369h1v1h-1zM446 369h1v1h-1zM447 369h1v1h-1zM448 369h1v1h-1zM442 370h1v1h-1zM443 370h1v1h-1zM444 370h1v1h-1zM445 370h1v1h-1zM446 370h1v1h-1zM447 370h1v1h-1zM448 370h1v1h-1zM449 370h1v1h-1zM442 371h1v1h-1zM443 371h1v1h-1zM444 371h1v1h-1zM445 371h1v1h-1zM446 371h1v1h-1zM447 371h1v1h-1zM448 371h1v1h-1zM449 371h1v1h-1zM442 372h1v1h-1zM443 372h1v1h-1zM444 372h1v1h-1zM445 372h1v1h-1zM446 372h1v1h-1zM447 372h1v1h-1zM448 372h1v1h-1zM449 372h1v1h-1zM442 373h1v1h-1zM443 373h1v1h-1zM444 373h1v1h-1zM445 373h1v1h-1zM446 373h1v1h-1zM447 373h1v1h-1zM448 373h1v1h-1zM449 373h1v1h-1zM443 374h1v1h-1zM444 374h1v1h-1zM445 374h1v1h-1zM446 374h1v1h-1zM447 374h1v1h-1zM448 374h1v1h-1zM444 375h1v1h-1zM445 375h1v1h-1zM446 375h1v1h-1zM447 375h1v1h-1zM450 368h1v1h-1zM450 369h1v1h-1zM451 370h1v1h-1zM451 371h1v1h-1zM451 372h1v1h-1zM451 373h1v1h-1zM450 374h1v1h-1zM450 375h1v1h-1zM442 376h1v1h-1zM443 376h1v1h-1zM448 376h1v1h-1zM449 376h1v1h-1zM444 377h1v1h-1zM445 377h1v1h-1zM446 377h1v1h-1zM447 377h1v1h-1z" fill="#ffffff"/>
<path d="M444 367h1v1h-1zM445 367h1v1h-1zM446 367h1v1h-1zM447 367h1v1h-1zM442 368h1v1h-1zM443 368h1v1h-1zM448 368h1v1h-1zM442 369h1v1h-1zM441 370h1v1h-1zM441 371h1v1h-1zM441 372h1v1h-1zM441 373h1v1h-1zM442 374h1v1h-1z" fill="#696969"/>
<path d="M449 368h1v1h-1zM449 369h1v1h-1zM450 370h1v1h-1zM450 371h1v1h-1zM450 372h1v1h-1zM450 373h1v1h-1zM449 374h1v1h-1zM442 375h1v1h-1zM443 375h1v1h-1zM448 375h1v1h-1zM449 375h1v1h-1zM444 376h1v1h-1zM445 376h1v1h-1zM446 376h1v1h-1zM447 376h1v1h-1z" fill="#e3e3e3"/>
<path d="M445 370h1v1h-1zM446 370h1v1h-1zM444 371h1v1h-1zM445 371h1v1h-1zM446 371h1v1h-1zM447 371h1v1h-1zM444 372h1v1h-1zM445 372h1v1h-1zM446 372h1v1h-1zM447 372h1v1h-1zM445 373h1v1h-1zM446 373h1v1h-1z" fill="#000"/>
<text x="456.75" y="377" font-size="11.5" font-weight="400" fill="#000" textLength="26.10" lengthAdjust="spacingAndGlyphs">3.3 V</text>
<rect x="494" y="366" width="13" height="13" fill="#ffffff" />
<rect x="494" y="366" width="12" height="1" fill="#a0a0a0" />
<rect x="494" y="366" width="1" height="12" fill="#a0a0a0" />
<rect x="495" y="367" width="10" height="1" fill="#696969" />
<rect x="495" y="367" width="1" height="10" fill="#696969" />
<rect x="495" y="377" width="11" height="1" fill="#e3e3e3" />
<rect x="505" y="367" width="1" height="11" fill="#e3e3e3" />
<path d="M497.5 371.5 L499.5 374.5 L503.5 369.5" stroke="#000" stroke-width="2.2" fill="none" shape-rendering="geometricPrecision"/>
<text x="512.20" y="377" font-size="11.5" font-weight="400" fill="#000" textLength="52.59" lengthAdjust="spacingAndGlyphs">Auto verify</text>
<rect x="14" y="393" width="13" height="13" fill="#ffffff" />
<rect x="14" y="393" width="12" height="1" fill="#a0a0a0" />
<rect x="14" y="393" width="1" height="12" fill="#a0a0a0" />
<rect x="15" y="394" width="10" height="1" fill="#696969" />
<rect x="15" y="394" width="1" height="10" fill="#696969" />
<rect x="15" y="404" width="11" height="1" fill="#e3e3e3" />
<rect x="25" y="394" width="1" height="11" fill="#e3e3e3" />
<path d="M17.5 398.5 L19.5 401.5 L23.5 396.5" stroke="#000" stroke-width="2.2" fill="none" shape-rendering="geometricPrecision"/>
<text x="32.64" y="404" font-size="11.5" font-weight="400" fill="#000" textLength="97.24" lengthAdjust="spacingAndGlyphs">Check pins connect</text>
<rect x="353" y="393" width="13" height="13" fill="#ffffff" />
<rect x="353" y="393" width="12" height="1" fill="#a0a0a0" />
<rect x="353" y="393" width="1" height="12" fill="#a0a0a0" />
<rect x="354" y="394" width="10" height="1" fill="#696969" />
<rect x="354" y="394" width="1" height="10" fill="#696969" />
<rect x="354" y="404" width="11" height="1" fill="#e3e3e3" />
<rect x="364" y="394" width="1" height="11" fill="#e3e3e3" />
<text x="371.71" y="404" font-size="11.5" font-weight="400" fill="#000" textLength="31.63" lengthAdjust="spacingAndGlyphs">QUAD</text>
<text x="13.31" y="434" font-size="11.5" font-weight="400" fill="#000" textLength="68.54" lengthAdjust="spacingAndGlyphs">Manufacturer:</text>
<text x="13.98" y="458" font-size="11.5" font-weight="400" fill="#000" textLength="54.41" lengthAdjust="spacingAndGlyphs">Type: 8987</text>
<text x="13.71" y="477" font-size="11.5" font-weight="400" fill="#000" textLength="58.55" lengthAdjust="spacingAndGlyphs">Size: 128Kb</text>
<text x="13.29" y="498" font-size="11.5" font-weight="400" fill="#000" textLength="46.56" lengthAdjust="spacingAndGlyphs">File path:</text>
<rect x="416" y="405" width="153" height="1" fill="#a0a0a0" />
<rect x="417" y="406" width="151" height="1" fill="#ffffff" />
<rect x="416" y="405" width="1" height="79" fill="#a0a0a0" />
<rect x="417" y="406" width="1" height="77" fill="#ffffff" />
<rect x="416" y="483" width="153" height="1" fill="#a0a0a0" />
<rect x="416" y="484" width="154" height="1" fill="#ffffff" />
<rect x="568" y="405" width="1" height="79" fill="#a0a0a0" />
<rect x="569" y="405" width="1" height="80" fill="#ffffff" />
<rect x="425" y="402" width="56" height="6" fill="#f0f0f0" />
<text x="427.20" y="411" font-size="11.5" font-weight="400" fill="#000" textLength="50.08" lengthAdjust="spacingAndGlyphs">Auto Write</text>
<rect x="422" y="421" width="13" height="13" fill="#ffffff" />
<rect x="422" y="421" width="12" height="1" fill="#a0a0a0" />
<rect x="422" y="421" width="1" height="12" fill="#a0a0a0" />
<rect x="423" y="422" width="10" height="1" fill="#696969" />
<rect x="423" y="422" width="1" height="10" fill="#696969" />
<rect x="423" y="432" width="11" height="1" fill="#e3e3e3" />
<rect x="433" y="422" width="1" height="11" fill="#e3e3e3" />
<path d="M425.5 426.5 L427.5 429.5 L431.5 424.5" stroke="#000" stroke-width="2.2" fill="none" shape-rendering="geometricPrecision"/>
<text x="439.25" y="432" font-size="11.5" font-weight="400" fill="#000" textLength="31.12" lengthAdjust="spacingAndGlyphs">Erase</text>
<rect x="493" y="421" width="13" height="13" fill="#ffffff" />
<rect x="493" y="421" width="12" height="1" fill="#a0a0a0" />
<rect x="493" y="421" width="1" height="12" fill="#a0a0a0" />
<rect x="494" y="422" width="10" height="1" fill="#696969" />
<rect x="494" y="422" width="1" height="10" fill="#696969" />
<rect x="494" y="432" width="11" height="1" fill="#e3e3e3" />
<rect x="504" y="422" width="1" height="11" fill="#e3e3e3" />
<text x="511.30" y="432" font-size="11.5" font-weight="400" fill="#000" textLength="41.27" lengthAdjust="spacingAndGlyphs">External</text>
<rect x="422" y="444" width="13" height="13" fill="#ffffff" />
<rect x="422" y="444" width="12" height="1" fill="#a0a0a0" />
<rect x="422" y="444" width="1" height="12" fill="#a0a0a0" />
<rect x="423" y="445" width="10" height="1" fill="#696969" />
<rect x="423" y="445" width="1" height="10" fill="#696969" />
<rect x="423" y="455" width="11" height="1" fill="#e3e3e3" />
<rect x="433" y="445" width="1" height="11" fill="#e3e3e3" />
<path d="M425.5 449.5 L427.5 452.5 L431.5 447.5" stroke="#000" stroke-width="2.2" fill="none" shape-rendering="geometricPrecision"/>
<text x="439.29" y="455" font-size="11.5" font-weight="400" fill="#000" textLength="61.53" lengthAdjust="spacingAndGlyphs">Blank check</text>
<rect x="422" y="467" width="13" height="13" fill="#ffffff" />
<rect x="422" y="467" width="12" height="1" fill="#a0a0a0" />
<rect x="422" y="467" width="1" height="12" fill="#a0a0a0" />
<rect x="423" y="468" width="10" height="1" fill="#696969" />
<rect x="423" y="468" width="1" height="10" fill="#696969" />
<rect x="423" y="478" width="11" height="1" fill="#e3e3e3" />
<rect x="433" y="468" width="1" height="11" fill="#e3e3e3" />
<path d="M425.5 472.5 L427.5 475.5 L431.5 470.5" stroke="#000" stroke-width="2.2" fill="none" shape-rendering="geometricPrecision"/>
<text x="440.14" y="478" font-size="11.5" font-weight="400" fill="#000" textLength="28.67" lengthAdjust="spacingAndGlyphs">Verify</text>
<rect x="417" y="492" width="152" height="1" fill="#a0a0a0" />
<rect x="418" y="493" width="150" height="1" fill="#ffffff" />
<rect x="417" y="492" width="1" height="43" fill="#a0a0a0" />
<rect x="418" y="493" width="1" height="41" fill="#ffffff" />
<rect x="417" y="534" width="152" height="1" fill="#a0a0a0" />
<rect x="417" y="535" width="153" height="1" fill="#ffffff" />
<rect x="568" y="492" width="1" height="43" fill="#a0a0a0" />
<rect x="569" y="492" width="1" height="44" fill="#ffffff" />
<rect x="426" y="489" width="109" height="6" fill="#f0f0f0" />
<text x="426.31" y="498" font-size="11.5" font-weight="400" fill="#000" textLength="103.68" lengthAdjust="spacingAndGlyphs">Mode of programmer</text>
<rect x="423" y="506" width="141" height="21" fill="#ffffff" />
<rect x="423" y="506" width="140" height="1" fill="#a0a0a0" />
<rect x="423" y="506" width="1" height="20" fill="#a0a0a0" />
<rect x="424" y="507" width="138" height="1" fill="#696969" />
<rect x="424" y="507" width="1" height="18" fill="#696969" />
<rect x="423" y="526" width="141" height="1" fill="#ffffff" />
<rect x="563" y="506" width="1" height="21" fill="#ffffff" />
<rect x="424" y="525" width="139" height="1" fill="#e3e3e3" />
<rect x="562" y="507" width="1" height="19" fill="#e3e3e3" />
<rect x="545" y="508" width="17" height="17" fill="#f0f0f0" />
<rect x="545" y="508" width="17" height="1" fill="#e3e3e3" />
<rect x="545" y="508" width="1" height="17" fill="#e3e3e3" />
<rect x="546" y="509" width="15" height="1" fill="#ffffff" />
<rect x="546" y="509" width="1" height="15" fill="#ffffff" />
<rect x="545" y="524" width="17" height="1" fill="#696969" />
<rect x="561" y="508" width="1" height="17" fill="#696969" />
<rect x="546" y="523" width="15" height="1" fill="#a0a0a0" />
<rect x="560" y="509" width="1" height="15" fill="#a0a0a0" />
<path d="M550 515 H557 V516 H556 V517 H555 V518 H554 V519 H553 V518 H552 V517 H551 V516 H550 Z" fill="#000"/>
<text x="425.15" y="520" font-size="11.5" font-weight="400" fill="#000" textLength="18.12" lengthAdjust="spacingAndGlyphs">ITE</text>
<rect x="589" y="79" width="192" height="1" fill="#a0a0a0" />
<rect x="590" y="80" width="190" height="1" fill="#ffffff" />
<rect x="589" y="79" width="1" height="468" fill="#a0a0a0" />
<rect x="590" y="80" width="1" height="466" fill="#ffffff" />
<rect x="589" y="546" width="192" height="1" fill="#a0a0a0" />
<rect x="589" y="547" width="193" height="1" fill="#ffffff" />
<rect x="780" y="79" width="1" height="468" fill="#a0a0a0" />
<rect x="781" y="79" width="1" height="469" fill="#ffffff" />
<rect x="598" y="76" width="36" height="6" fill="#f0f0f0" />
<text x="598.85" y="85" font-size="12" font-weight="400" fill="#000" textLength="33.41" lengthAdjust="spacingAndGlyphs">ZIF 48</text>
<rect x="595" y="88" width="130" height="1" fill="#000" />
<rect x="595" y="503" width="130" height="1" fill="#000" />
<rect x="595" y="88" width="1" height="416" fill="#000" />
<rect x="724" y="88" width="1" height="416" fill="#000" />
<rect x="596" y="89" width="128" height="1" fill="#ffffff" />
<rect x="723" y="89" width="1" height="414" fill="#ffffff" />
<rect x="602" y="137" width="47" height="1" fill="#000" />
<rect x="602" y="477" width="47" height="1" fill="#000" />
<rect x="602" y="137" width="1" height="341" fill="#000" />
<rect x="648" y="137" width="1" height="341" fill="#000" />
<rect x="603" y="138" width="45" height="339" fill="#ffffff" />
<rect x="604" y="139" width="1" height="337" fill="#f0f0f0" />
<rect x="605" y="139" width="1" height="337" fill="#f0f0f0" />
<rect x="609" y="475" width="38" height="1" fill="#f0f0f0" />
<rect x="607" y="141" width="1" height="333" fill="#000" />
<rect x="648" y="141" width="1" height="333" fill="#000" />
<rect x="607" y="141" width="42" height="1" fill="#000" />
<rect x="607" y="151" width="42" height="1" fill="#000" />
<rect x="608" y="142" width="40" height="9" fill="#ffffff" />
<rect x="609" y="153" width="39" height="1" fill="#f0f0f0" />
<rect x="607" y="155" width="42" height="1" fill="#000" />
<rect x="607" y="165" width="42" height="1" fill="#000" />
<rect x="608" y="156" width="40" height="9" fill="#ffffff" />
<rect x="609" y="167" width="39" height="1" fill="#f0f0f0" />
<rect x="607" y="169" width="42" height="1" fill="#000" />
<rect x="607" y="179" width="42" height="1" fill="#000" />
<rect x="608" y="170" width="40" height="9" fill="#ffffff" />
<rect x="609" y="181" width="39" height="1" fill="#f0f0f0" />
<rect x="607" y="183" width="42" height="1" fill="#000" />
<rect x="607" y="193" width="42" height="1" fill="#000" />
<rect x="608" y="184" width="40" height="9" fill="#ffffff" />
<rect x="609" y="195" width="39" height="1" fill="#f0f0f0" />
<rect x="607" y="197" width="42" height="1" fill="#000" />
<rect x="607" y="207" width="42" height="1" fill="#000" />
<rect x="608" y="198" width="40" height="9" fill="#0000ff" />
<rect x="609" y="209" width="39" height="1" fill="#f0f0f0" />
<rect x="607" y="211" width="42" height="1" fill="#000" />
<rect x="607" y="221" width="42" height="1" fill="#000" />
<rect x="608" y="212" width="40" height="9" fill="#0000ff" />
<rect x="609" y="223" width="39" height="1" fill="#f0f0f0" />
<rect x="607" y="225" width="42" height="1" fill="#000" />
<rect x="607" y="235" width="42" height="1" fill="#000" />
<rect x="608" y="226" width="40" height="9" fill="#0000ff" />
<rect x="609" y="237" width="39" height="1" fill="#f0f0f0" />
<rect x="607" y="239" width="42" height="1" fill="#000" />
<rect x="607" y="249" width="42" height="1" fill="#000" />
<rect x="608" y="240" width="40" height="9" fill="#0000ff" />
<rect x="609" y="251" width="39" height="1" fill="#f0f0f0" />
<rect x="607" y="253" width="42" height="1" fill="#000" />
<rect x="607" y="263" width="42" height="1" fill="#000" />
<rect x="608" y="254" width="40" height="9" fill="#0000ff" />
<rect x="609" y="265" width="39" height="1" fill="#f0f0f0" />
<rect x="607" y="267" width="42" height="1" fill="#000" />
<rect x="607" y="277" width="42" height="1" fill="#000" />
<rect x="608" y="268" width="40" height="9" fill="#0000ff" />
<rect x="609" y="279" width="39" height="1" fill="#f0f0f0" />
<rect x="607" y="281" width="42" height="1" fill="#000" />
<rect x="607" y="291" width="42" height="1" fill="#000" />
<rect x="608" y="282" width="40" height="9" fill="#0000ff" />
<rect x="609" y="293" width="39" height="1" fill="#f0f0f0" />
<rect x="607" y="295" width="42" height="1" fill="#000" />
<rect x="607" y="305" width="42" height="1" fill="#000" />
<rect x="608" y="296" width="40" height="9" fill="#0000ff" />
<rect x="609" y="307" width="39" height="1" fill="#f0f0f0" />
<rect x="607" y="309" width="42" height="1" fill="#000" />
<rect x="607" y="319" width="42" height="1" fill="#000" />
<rect x="608" y="310" width="40" height="9" fill="#0000ff" />
<rect x="609" y="321" width="39" height="1" fill="#f0f0f0" />
<rect x="607" y="323" width="42" height="1" fill="#000" />
<rect x="607" y="333" width="42" height="1" fill="#000" />
<rect x="608" y="324" width="40" height="9" fill="#0000ff" />
<rect x="609" y="335" width="39" height="1" fill="#f0f0f0" />
<rect x="607" y="337" width="42" height="1" fill="#000" />
<rect x="607" y="347" width="42" height="1" fill="#000" />
<rect x="608" y="338" width="40" height="9" fill="#0000ff" />
<rect x="609" y="349" width="39" height="1" fill="#f0f0f0" />
<rect x="607" y="351" width="42" height="1" fill="#000" />
<rect x="607" y="361" width="42" height="1" fill="#000" />
<rect x="608" y="352" width="40" height="9" fill="#0000ff" />
<rect x="609" y="363" width="39" height="1" fill="#f0f0f0" />
<rect x="607" y="365" width="42" height="1" fill="#000" />
<rect x="607" y="375" width="42" height="1" fill="#000" />
<rect x="608" y="366" width="40" height="9" fill="#0000ff" />
<rect x="609" y="377" width="39" height="1" fill="#f0f0f0" />
<rect x="607" y="379" width="42" height="1" fill="#000" />
<rect x="607" y="389" width="42" height="1" fill="#000" />
<rect x="608" y="380" width="40" height="9" fill="#0000ff" />
<rect x="609" y="391" width="39" height="1" fill="#f0f0f0" />
<rect x="607" y="393" width="42" height="1" fill="#000" />
<rect x="607" y="403" width="42" height="1" fill="#000" />
<rect x="608" y="394" width="40" height="9" fill="#0000ff" />
<rect x="609" y="405" width="39" height="1" fill="#f0f0f0" />
<rect x="607" y="407" width="42" height="1" fill="#000" />
<rect x="607" y="417" width="42" height="1" fill="#000" />
<rect x="608" y="408" width="40" height="9" fill="#0000ff" />
<rect x="609" y="419" width="39" height="1" fill="#f0f0f0" />
<rect x="607" y="421" width="42" height="1" fill="#000" />
<rect x="607" y="431" width="42" height="1" fill="#000" />
<rect x="608" y="422" width="40" height="9" fill="#0000ff" />
<rect x="609" y="433" width="39" height="1" fill="#f0f0f0" />
<rect x="607" y="435" width="42" height="1" fill="#000" />
<rect x="607" y="445" width="42" height="1" fill="#000" />
<rect x="608" y="436" width="40" height="9" fill="#0000ff" />
<rect x="609" y="447" width="39" height="1" fill="#f0f0f0" />
<rect x="607" y="449" width="42" height="1" fill="#000" />
<rect x="607" y="459" width="42" height="1" fill="#000" />
<rect x="608" y="450" width="40" height="9" fill="#0000ff" />
<rect x="609" y="461" width="39" height="1" fill="#f0f0f0" />
<rect x="607" y="463" width="42" height="1" fill="#000" />
<rect x="607" y="473" width="42" height="1" fill="#000" />
<rect x="608" y="464" width="40" height="9" fill="#0000ff" />
<rect x="671" y="137" width="47" height="1" fill="#000" />
<rect x="671" y="477" width="47" height="1" fill="#000" />
<rect x="671" y="137" width="1" height="341" fill="#000" />
<rect x="717" y="137" width="1" height="341" fill="#000" />
<rect x="672" y="138" width="45" height="339" fill="#ffffff" />
<rect x="715" y="139" width="1" height="337" fill="#f0f0f0" />
<rect x="714" y="139" width="1" height="337" fill="#f0f0f0" />
<rect x="673" y="475" width="38" height="1" fill="#f0f0f0" />
<rect x="671" y="141" width="1" height="333" fill="#000" />
<rect x="712" y="141" width="1" height="333" fill="#000" />
<rect x="671" y="141" width="42" height="1" fill="#000" />
<rect x="671" y="151" width="42" height="1" fill="#000" />
<rect x="672" y="142" width="40" height="9" fill="#ffffff" />
<rect x="673" y="153" width="39" height="1" fill="#f0f0f0" />
<rect x="671" y="155" width="42" height="1" fill="#000" />
<rect x="671" y="165" width="42" height="1" fill="#000" />
<rect x="672" y="156" width="40" height="9" fill="#ffffff" />
<rect x="673" y="167" width="39" height="1" fill="#f0f0f0" />
<rect x="671" y="169" width="42" height="1" fill="#000" />
<rect x="671" y="179" width="42" height="1" fill="#000" />
<rect x="672" y="170" width="40" height="9" fill="#ffffff" />
<rect x="673" y="181" width="39" height="1" fill="#f0f0f0" />
<rect x="671" y="183" width="42" height="1" fill="#000" />
<rect x="671" y="193" width="42" height="1" fill="#000" />
<rect x="672" y="184" width="40" height="9" fill="#ffffff" />
<rect x="673" y="195" width="39" height="1" fill="#f0f0f0" />
<rect x="671" y="197" width="42" height="1" fill="#000" />
<rect x="671" y="207" width="42" height="1" fill="#000" />
<rect x="672" y="198" width="40" height="9" fill="#0000ff" />
<rect x="673" y="209" width="39" height="1" fill="#f0f0f0" />
<rect x="671" y="211" width="42" height="1" fill="#000" />
<rect x="671" y="221" width="42" height="1" fill="#000" />
<rect x="672" y="212" width="40" height="9" fill="#0000ff" />
<rect x="673" y="223" width="39" height="1" fill="#f0f0f0" />
<rect x="671" y="225" width="42" height="1" fill="#000" />
<rect x="671" y="235" width="42" height="1" fill="#000" />
<rect x="672" y="226" width="40" height="9" fill="#0000ff" />
<rect x="673" y="237" width="39" height="1" fill="#f0f0f0" />
<rect x="671" y="239" width="42" height="1" fill="#000" />
<rect x="671" y="249" width="42" height="1" fill="#000" />
<rect x="672" y="240" width="40" height="9" fill="#0000ff" />
<rect x="673" y="251" width="39" height="1" fill="#f0f0f0" />
<rect x="671" y="253" width="42" height="1" fill="#000" />
<rect x="671" y="263" width="42" height="1" fill="#000" />
<rect x="672" y="254" width="40" height="9" fill="#0000ff" />
<rect x="673" y="265" width="39" height="1" fill="#f0f0f0" />
<rect x="671" y="267" width="42" height="1" fill="#000" />
<rect x="671" y="277" width="42" height="1" fill="#000" />
<rect x="672" y="268" width="40" height="9" fill="#0000ff" />
<rect x="673" y="279" width="39" height="1" fill="#f0f0f0" />
<rect x="671" y="281" width="42" height="1" fill="#000" />
<rect x="671" y="291" width="42" height="1" fill="#000" />
<rect x="672" y="282" width="40" height="9" fill="#0000ff" />
<rect x="673" y="293" width="39" height="1" fill="#f0f0f0" />
<rect x="671" y="295" width="42" height="1" fill="#000" />
<rect x="671" y="305" width="42" height="1" fill="#000" />
<rect x="672" y="296" width="40" height="9" fill="#0000ff" />
<rect x="673" y="307" width="39" height="1" fill="#f0f0f0" />
<rect x="671" y="309" width="42" height="1" fill="#000" />
<rect x="671" y="319" width="42" height="1" fill="#000" />
<rect x="672" y="310" width="40" height="9" fill="#0000ff" />
<rect x="673" y="321" width="39" height="1" fill="#f0f0f0" />
<rect x="671" y="323" width="42" height="1" fill="#000" />
<rect x="671" y="333" width="42" height="1" fill="#000" />
<rect x="672" y="324" width="40" height="9" fill="#0000ff" />
<rect x="673" y="335" width="39" height="1" fill="#f0f0f0" />
<rect x="671" y="337" width="42" height="1" fill="#000" />
<rect x="671" y="347" width="42" height="1" fill="#000" />
<rect x="672" y="338" width="40" height="9" fill="#0000ff" />
<rect x="673" y="349" width="39" height="1" fill="#f0f0f0" />
<rect x="671" y="351" width="42" height="1" fill="#000" />
<rect x="671" y="361" width="42" height="1" fill="#000" />
<rect x="672" y="352" width="40" height="9" fill="#0000ff" />
<rect x="673" y="363" width="39" height="1" fill="#f0f0f0" />
<rect x="671" y="365" width="42" height="1" fill="#000" />
<rect x="671" y="375" width="42" height="1" fill="#000" />
<rect x="672" y="366" width="40" height="9" fill="#0000ff" />
<rect x="673" y="377" width="39" height="1" fill="#f0f0f0" />
<rect x="671" y="379" width="42" height="1" fill="#000" />
<rect x="671" y="389" width="42" height="1" fill="#000" />
<rect x="672" y="380" width="40" height="9" fill="#0000ff" />
<rect x="673" y="391" width="39" height="1" fill="#f0f0f0" />
<rect x="671" y="393" width="42" height="1" fill="#000" />
<rect x="671" y="403" width="42" height="1" fill="#000" />
<rect x="672" y="394" width="40" height="9" fill="#0000ff" />
<rect x="673" y="405" width="39" height="1" fill="#f0f0f0" />
<rect x="671" y="407" width="42" height="1" fill="#000" />
<rect x="671" y="417" width="42" height="1" fill="#000" />
<rect x="672" y="408" width="40" height="9" fill="#0000ff" />
<rect x="673" y="419" width="39" height="1" fill="#f0f0f0" />
<rect x="671" y="421" width="42" height="1" fill="#000" />
<rect x="671" y="431" width="42" height="1" fill="#000" />
<rect x="672" y="422" width="40" height="9" fill="#0000ff" />
<rect x="673" y="433" width="39" height="1" fill="#f0f0f0" />
<rect x="671" y="435" width="42" height="1" fill="#000" />
<rect x="671" y="445" width="42" height="1" fill="#000" />
<rect x="672" y="436" width="40" height="9" fill="#0000ff" />
<rect x="673" y="447" width="39" height="1" fill="#f0f0f0" />
<rect x="671" y="449" width="42" height="1" fill="#000" />
<rect x="671" y="459" width="42" height="1" fill="#000" />
<rect x="672" y="450" width="40" height="9" fill="#0000ff" />
<rect x="673" y="461" width="39" height="1" fill="#f0f0f0" />
<rect x="671" y="463" width="42" height="1" fill="#000" />
<rect x="671" y="473" width="42" height="1" fill="#000" />
<rect x="672" y="464" width="40" height="9" fill="#0000ff" />
<path d="M610 198 H615 V199 H616 V200 H617 V205 H616 V206 H615 V207 H610 V206 H609 V205 H608 V200 H609 V199 H610 Z" fill="#000"/>
<rect x="745" y="169" width="21" height="11" fill="#000" />
<rect x="746" y="170" width="19" height="9" fill="#0000ff" />
<rect x="745" y="253" width="21" height="11" fill="#000" />
<rect x="746" y="254" width="19" height="9" fill="#ffffff" />
<rect x="745" y="337" width="21" height="11" fill="#000" />
<rect x="746" y="338" width="19" height="9" fill="#ffffff" />
<rect x="745" y="421" width="21" height="11" fill="#000" />
<rect x="746" y="422" width="19" height="9" fill="#ffffff" />
<path d="M652 98h1v1h-1zM652 99h1v1h-1zM652 100h1v1h-1zM652 101h1v1h-1zM652 102h1v1h-1zM652 103h1v1h-1zM653 97h1v1h-1zM653 104h1v1h-1zM654 95h1v1h-1zM654 96h1v1h-1zM654 100h1v1h-1zM654 101h1v1h-1zM654 105h1v1h-1zM654 106h1v1h-1zM655 95h1v1h-1zM655 100h1v1h-1zM655 101h1v1h-1zM655 106h1v1h-1zM656 94h1v1h-1zM656 99h1v1h-1zM656 102h1v1h-1zM656 107h1v1h-1zM657 93h1v1h-1zM657 99h1v1h-1zM657 102h1v1h-1zM657 108h1v1h-1zM658 93h1v1h-1zM658 97h1v1h-1zM658 98h1v1h-1zM658 99h1v1h-1zM658 100h1v1h-1zM658 101h1v1h-1zM658 102h1v1h-1zM658 103h1v1h-1zM658 104h1v1h-1zM658 108h1v1h-1zM659 93h1v1h-1zM659 95h1v1h-1zM659 96h1v1h-1zM659 99h1v1h-1zM659 102h1v1h-1zM659 105h1v1h-1zM659 106h1v1h-1zM659 108h1v1h-1zM660 93h1v1h-1zM660 95h1v1h-1zM660 96h1v1h-1zM660 99h1v1h-1zM660 102h1v1h-1zM660 105h1v1h-1zM660 106h1v1h-1zM660 108h1v1h-1zM661 93h1v1h-1zM661 97h1v1h-1zM661 98h1v1h-1zM661 99h1v1h-1zM661 100h1v1h-1zM661 101h1v1h-1zM661 102h1v1h-1zM661 103h1v1h-1zM661 104h1v1h-1zM661 108h1v1h-1zM662 93h1v1h-1zM662 99h1v1h-1zM662 102h1v1h-1zM662 108h1v1h-1zM663 94h1v1h-1zM663 99h1v1h-1zM663 102h1v1h-1zM663 107h1v1h-1zM664 95h1v1h-1zM664 100h1v1h-1zM664 101h1v1h-1zM664 106h1v1h-1zM665 95h1v1h-1zM665 96h1v1h-1zM665 100h1v1h-1zM665 101h1v1h-1zM665 105h1v1h-1zM665 106h1v1h-1zM666 97h1v1h-1zM666 104h1v1h-1zM667 98h1v1h-1zM667 99h1v1h-1zM667 100h1v1h-1zM667 101h1v1h-1zM667 102h1v1h-1zM667 103h1v1h-1z" fill="#000"/>
<path d="M652 488h1v1h-1zM652 489h1v1h-1zM652 490h1v1h-1zM652 491h1v1h-1zM652 492h1v1h-1zM652 493h1v1h-1zM653 487h1v1h-1zM653 494h1v1h-1zM654 485h1v1h-1zM654 486h1v1h-1zM654 490h1v1h-1zM654 491h1v1h-1zM654 495h1v1h-1zM654 496h1v1h-1zM655 485h1v1h-1zM655 490h1v1h-1zM655 491h1v1h-1zM655 496h1v1h-1zM656 484h1v1h-1zM656 489h1v1h-1zM656 492h1v1h-1zM656 497h1v1h-1zM657 483h1v1h-1zM657 489h1v1h-1zM657 492h1v1h-1zM657 498h1v1h-1zM658 483h1v1h-1zM658 487h1v1h-1zM658 488h1v1h-1zM658 489h1v1h-1zM658 490h1v1h-1zM658 491h1v1h-1zM658 492h1v1h-1zM658 493h1v1h-1zM658 494h1v1h-1zM658 498h1v1h-1zM659 483h1v1h-1zM659 485h1v1h-1zM659 486h1v1h-1zM659 489h1v1h-1zM659 492h1v1h-1zM659 495h1v1h-1zM659 496h1v1h-1zM659 498h1v1h-1zM660 483h1v1h-1zM660 485h1v1h-1zM660 486h1v1h-1zM660 489h1v1h-1zM660 492h1v1h-1zM660 495h1v1h-1zM660 496h1v1h-1zM660 498h1v1h-1zM661 483h1v1h-1zM661 487h1v1h-1zM661 488h1v1h-1zM661 489h1v1h-1zM661 490h1v1h-1zM661 491h1v1h-1zM661 492h1v1h-1zM661 493h1v1h-1zM661 494h1v1h-1zM661 498h1v1h-1zM662 483h1v1h-1zM662 489h1v1h-1zM662 492h1v1h-1zM662 498h1v1h-1zM663 484h1v1h-1zM663 489h1v1h-1zM663 492h1v1h-1zM663 497h1v1h-1zM664 485h1v1h-1zM664 490h1v1h-1zM664 491h1v1h-1zM664 496h1v1h-1zM665 485h1v1h-1zM665 486h1v1h-1zM665 490h1v1h-1zM665 491h1v1h-1zM665 495h1v1h-1zM665 496h1v1h-1zM666 487h1v1h-1zM666 494h1v1h-1zM667 488h1v1h-1zM667 489h1v1h-1zM667 490h1v1h-1zM667 491h1v1h-1zM667 492h1v1h-1zM667 493h1v1h-1z" fill="#000"/>
<rect x="600" y="506" width="121" height="1" fill="#000" />
<rect x="600" y="540" width="121" height="1" fill="#000" />
<rect x="600" y="506" width="1" height="35" fill="#000" />
<rect x="720" y="506" width="1" height="35" fill="#000" />
<rect x="601" y="507" width="119" height="1" fill="#ffffff" />
<rect x="601" y="507" width="1" height="33" fill="#ffffff" />
<rect x="601" y="539" width="119" height="1" fill="#ffffff" />
<rect x="719" y="507" width="1" height="33" fill="#ffffff" />
<rect x="605" y="510" width="13" height="13" fill="#000" />
<rect x="606" y="511" width="11" height="11" fill="#ffffff" />
<rect x="608" y="513" width="7" height="7" fill="#000" />
<rect x="609" y="514" width="5" height="5" fill="#ffffff" />
<rect x="610" y="515" width="3" height="3" fill="#f0f0f0" />
<rect x="606" y="511" width="1" height="1" fill="#000" />
<rect x="607" y="512" width="1" height="1" fill="#000" />
<rect x="615" y="520" width="1" height="1" fill="#000" />
<rect x="616" y="521" width="1" height="1" fill="#000" />
<rect x="606" y="521" width="1" height="1" fill="#000" />
<rect x="607" y="520" width="1" height="1" fill="#000" />
<rect x="615" y="512" width="1" height="1" fill="#000" />
<rect x="616" y="511" width="1" height="1" fill="#000" />
<rect x="619" y="510" width="13" height="13" fill="#000" />
<rect x="620" y="511" width="11" height="11" fill="#ffffff" />
<rect x="622" y="513" width="7" height="7" fill="#000" />
<rect x="623" y="514" width="5" height="5" fill="#ffffff" />
<rect x="624" y="515" width="3" height="3" fill="#f0f0f0" />
<rect x="620" y="511" width="1" height="1" fill="#000" />
<rect x="621" y="512" width="1" height="1" fill="#000" />
<rect x="629" y="520" width="1" height="1" fill="#000" />
<rect x="630" y="521" width="1" height="1" fill="#000" />
<rect x="620" y="521" width="1" height="1" fill="#000" />
<rect x="621" y="520" width="1" height="1" fill="#000" />
<rect x="629" y="512" width="1" height="1" fill="#000" />
<rect x="630" y="511" width="1" height="1" fill="#000" />
<rect x="633" y="510" width="13" height="13" fill="#000" />
<rect x="634" y="511" width="11" height="11" fill="#ffffff" />
<rect x="636" y="513" width="7" height="7" fill="#000" />
<rect x="637" y="514" width="5" height="5" fill="#ffffff" />
<rect x="638" y="515" width="3" height="3" fill="#f0f0f0" />
<rect x="634" y="511" width="1" height="1" fill="#000" />
<rect x="635" y="512" width="1" height="1" fill="#000" />
<rect x="643" y="520" width="1" height="1" fill="#000" />
<rect x="644" y="521" width="1" height="1" fill="#000" />
<rect x="634" y="521" width="1" height="1" fill="#000" />
<rect x="635" y="520" width="1" height="1" fill="#000" />
<rect x="643" y="512" width="1" height="1" fill="#000" />
<rect x="644" y="511" width="1" height="1" fill="#000" />
<rect x="647" y="510" width="13" height="13" fill="#000" />
<rect x="648" y="511" width="11" height="11" fill="#ffffff" />
<rect x="650" y="513" width="7" height="7" fill="#000" />
<rect x="651" y="514" width="5" height="5" fill="#ffffff" />
<rect x="652" y="515" width="3" height="3" fill="#f0f0f0" />
<rect x="648" y="511" width="1" height="1" fill="#000" />
<rect x="649" y="512" width="1" height="1" fill="#000" />
<rect x="657" y="520" width="1" height="1" fill="#000" />
<rect x="658" y="521" width="1" height="1" fill="#000" />
<rect x="648" y="521" width="1" height="1" fill="#000" />
<rect x="649" y="520" width="1" height="1" fill="#000" />
<rect x="657" y="512" width="1" height="1" fill="#000" />
<rect x="658" y="511" width="1" height="1" fill="#000" />
<rect x="661" y="510" width="13" height="13" fill="#000" />
<rect x="662" y="511" width="11" height="11" fill="#ffffff" />
<rect x="664" y="513" width="7" height="7" fill="#000" />
<rect x="665" y="514" width="5" height="5" fill="#ffffff" />
<rect x="666" y="515" width="3" height="3" fill="#f0f0f0" />
<rect x="662" y="511" width="1" height="1" fill="#000" />
<rect x="663" y="512" width="1" height="1" fill="#000" />
<rect x="671" y="520" width="1" height="1" fill="#000" />
<rect x="672" y="521" width="1" height="1" fill="#000" />
<rect x="662" y="521" width="1" height="1" fill="#000" />
<rect x="663" y="520" width="1" height="1" fill="#000" />
<rect x="671" y="512" width="1" height="1" fill="#000" />
<rect x="672" y="511" width="1" height="1" fill="#000" />
<rect x="675" y="510" width="13" height="13" fill="#000" />
<rect x="676" y="511" width="11" height="11" fill="#ffffff" />
<rect x="678" y="513" width="7" height="7" fill="#000" />
<rect x="679" y="514" width="5" height="5" fill="#ffffff" />
<rect x="680" y="515" width="3" height="3" fill="#f0f0f0" />
<rect x="676" y="511" width="1" height="1" fill="#000" />
<rect x="677" y="512" width="1" height="1" fill="#000" />
<rect x="685" y="520" width="1" height="1" fill="#000" />
<rect x="686" y="521" width="1" height="1" fill="#000" />
<rect x="676" y="521" width="1" height="1" fill="#000" />
<rect x="677" y="520" width="1" height="1" fill="#000" />
<rect x="685" y="512" width="1" height="1" fill="#000" />
<rect x="686" y="511" width="1" height="1" fill="#000" />
<rect x="689" y="510" width="13" height="13" fill="#000" />
<rect x="690" y="511" width="11" height="11" fill="#ffffff" />
<rect x="692" y="513" width="7" height="7" fill="#000" />
<rect x="693" y="514" width="5" height="5" fill="#ffffff" />
<rect x="694" y="515" width="3" height="3" fill="#f0f0f0" />
<rect x="690" y="511" width="1" height="1" fill="#000" />
<rect x="691" y="512" width="1" height="1" fill="#000" />
<rect x="699" y="520" width="1" height="1" fill="#000" />
<rect x="700" y="521" width="1" height="1" fill="#000" />
<rect x="690" y="521" width="1" height="1" fill="#000" />
<rect x="691" y="520" width="1" height="1" fill="#000" />
<rect x="699" y="512" width="1" height="1" fill="#000" />
<rect x="700" y="511" width="1" height="1" fill="#000" />
<rect x="703" y="510" width="13" height="13" fill="#000" />
<rect x="704" y="511" width="11" height="11" fill="#ffffff" />
<rect x="706" y="513" width="7" height="7" fill="#000" />
<rect x="707" y="514" width="5" height="5" fill="#ffffff" />
<rect x="708" y="515" width="3" height="3" fill="#f0f0f0" />
<rect x="704" y="511" width="1" height="1" fill="#000" />
<rect x="705" y="512" width="1" height="1" fill="#000" />
<rect x="713" y="520" width="1" height="1" fill="#000" />
<rect x="714" y="521" width="1" height="1" fill="#000" />
<rect x="704" y="521" width="1" height="1" fill="#000" />
<rect x="705" y="520" width="1" height="1" fill="#000" />
<rect x="713" y="512" width="1" height="1" fill="#000" />
<rect x="714" y="511" width="1" height="1" fill="#000" />
<rect x="605" y="524" width="13" height="13" fill="#000" />
<rect x="606" y="525" width="11" height="11" fill="#ffffff" />
<rect x="608" y="527" width="7" height="7" fill="#000" />
<rect x="609" y="528" width="5" height="5" fill="#ffffff" />
<rect x="610" y="529" width="3" height="3" fill="#f0f0f0" />
<rect x="606" y="525" width="1" height="1" fill="#000" />
<rect x="607" y="526" width="1" height="1" fill="#000" />
<rect x="615" y="534" width="1" height="1" fill="#000" />
<rect x="616" y="535" width="1" height="1" fill="#000" />
<rect x="606" y="535" width="1" height="1" fill="#000" />
<rect x="607" y="534" width="1" height="1" fill="#000" />
<rect x="615" y="526" width="1" height="1" fill="#000" />
<rect x="616" y="525" width="1" height="1" fill="#000" />
<rect x="619" y="524" width="13" height="13" fill="#000" />
<rect x="620" y="525" width="11" height="11" fill="#ffffff" />
<rect x="622" y="527" width="7" height="7" fill="#000" />
<rect x="623" y="528" width="5" height="5" fill="#ffffff" />
<rect x="624" y="529" width="3" height="3" fill="#f0f0f0" />
<rect x="620" y="525" width="1" height="1" fill="#000" />
<rect x="621" y="526" width="1" height="1" fill="#000" />
<rect x="629" y="534" width="1" height="1" fill="#000" />
<rect x="630" y="535" width="1" height="1" fill="#000" />
<rect x="620" y="535" width="1" height="1" fill="#000" />
<rect x="621" y="534" width="1" height="1" fill="#000" />
<rect x="629" y="526" width="1" height="1" fill="#000" />
<rect x="630" y="525" width="1" height="1" fill="#000" />
<rect x="633" y="524" width="13" height="13" fill="#000" />
<rect x="634" y="525" width="11" height="11" fill="#ffffff" />
<rect x="636" y="527" width="7" height="7" fill="#000" />
<rect x="637" y="528" width="5" height="5" fill="#ffffff" />
<rect x="638" y="529" width="3" height="3" fill="#f0f0f0" />
<rect x="634" y="525" width="1" height="1" fill="#000" />
<rect x="635" y="526" width="1" height="1" fill="#000" />
<rect x="643" y="534" width="1" height="1" fill="#000" />
<rect x="644" y="535" width="1" height="1" fill="#000" />
<rect x="634" y="535" width="1" height="1" fill="#000" />
<rect x="635" y="534" width="1" height="1" fill="#000" />
<rect x="643" y="526" width="1" height="1" fill="#000" />
<rect x="644" y="525" width="1" height="1" fill="#000" />
<rect x="647" y="524" width="13" height="13" fill="#000" />
<rect x="648" y="525" width="11" height="11" fill="#ffffff" />
<rect x="650" y="527" width="7" height="7" fill="#000" />
<rect x="651" y="528" width="5" height="5" fill="#ffffff" />
<rect x="652" y="529" width="3" height="3" fill="#f0f0f0" />
<rect x="648" y="525" width="1" height="1" fill="#000" />
<rect x="649" y="526" width="1" height="1" fill="#000" />
<rect x="657" y="534" width="1" height="1" fill="#000" />
<rect x="658" y="535" width="1" height="1" fill="#000" />
<rect x="648" y="535" width="1" height="1" fill="#000" />
<rect x="649" y="534" width="1" height="1" fill="#000" />
<rect x="657" y="526" width="1" height="1" fill="#000" />
<rect x="658" y="525" width="1" height="1" fill="#000" />
<rect x="661" y="524" width="13" height="13" fill="#000" />
<rect x="662" y="525" width="11" height="11" fill="#ffffff" />
<rect x="664" y="527" width="7" height="7" fill="#000" />
<rect x="665" y="528" width="5" height="5" fill="#ffffff" />
<rect x="666" y="529" width="3" height="3" fill="#f0f0f0" />
<rect x="662" y="525" width="1" height="1" fill="#000" />
<rect x="663" y="526" width="1" height="1" fill="#000" />
<rect x="671" y="534" width="1" height="1" fill="#000" />
<rect x="672" y="535" width="1" height="1" fill="#000" />
<rect x="662" y="535" width="1" height="1" fill="#000" />
<rect x="663" y="534" width="1" height="1" fill="#000" />
<rect x="671" y="526" width="1" height="1" fill="#000" />
<rect x="672" y="525" width="1" height="1" fill="#000" />
<rect x="675" y="524" width="13" height="13" fill="#000" />
<rect x="676" y="525" width="11" height="11" fill="#ffffff" />
<rect x="678" y="527" width="7" height="7" fill="#000" />
<rect x="679" y="528" width="5" height="5" fill="#ffffff" />
<rect x="680" y="529" width="3" height="3" fill="#f0f0f0" />
<rect x="676" y="525" width="1" height="1" fill="#000" />
<rect x="677" y="526" width="1" height="1" fill="#000" />
<rect x="685" y="534" width="1" height="1" fill="#000" />
<rect x="686" y="535" width="1" height="1" fill="#000" />
<rect x="676" y="535" width="1" height="1" fill="#000" />
<rect x="677" y="534" width="1" height="1" fill="#000" />
<rect x="685" y="526" width="1" height="1" fill="#000" />
<rect x="686" y="525" width="1" height="1" fill="#000" />
<rect x="689" y="524" width="13" height="13" fill="#000" />
<rect x="690" y="525" width="11" height="11" fill="#ffffff" />
<rect x="692" y="527" width="7" height="7" fill="#000" />
<rect x="693" y="528" width="5" height="5" fill="#ffffff" />
<rect x="694" y="529" width="3" height="3" fill="#f0f0f0" />
<rect x="690" y="525" width="1" height="1" fill="#000" />
<rect x="691" y="526" width="1" height="1" fill="#000" />
<rect x="699" y="534" width="1" height="1" fill="#000" />
<rect x="700" y="535" width="1" height="1" fill="#000" />
<rect x="690" y="535" width="1" height="1" fill="#000" />
<rect x="691" y="534" width="1" height="1" fill="#000" />
<rect x="699" y="526" width="1" height="1" fill="#000" />
<rect x="700" y="525" width="1" height="1" fill="#000" />
<rect x="703" y="524" width="13" height="13" fill="#000" />
<rect x="704" y="525" width="11" height="11" fill="#ffffff" />
<rect x="706" y="527" width="7" height="7" fill="#000" />
<rect x="707" y="528" width="5" height="5" fill="#ffffff" />
<rect x="708" y="529" width="3" height="3" fill="#f0f0f0" />
<rect x="704" y="525" width="1" height="1" fill="#000" />
<rect x="705" y="526" width="1" height="1" fill="#000" />
<rect x="713" y="534" width="1" height="1" fill="#000" />
<rect x="714" y="535" width="1" height="1" fill="#000" />
<rect x="704" y="535" width="1" height="1" fill="#000" />
<rect x="705" y="534" width="1" height="1" fill="#000" />
<rect x="713" y="526" width="1" height="1" fill="#000" />
<rect x="714" y="525" width="1" height="1" fill="#000" />
<rect x="1" y="552" width="785" height="1" fill="#ffffff" />
<rect x="3" y="555" width="575" height="1" fill="#a0a0a0" />
<rect x="3" y="555" width="1" height="15" fill="#a0a0a0" />
<rect x="4" y="556" width="573" height="1" fill="#ffffff" />
<rect x="4" y="556" width="1" height="14" fill="#ffffff" />
<rect x="4" y="569" width="574" height="1" fill="#ffffff" />
<rect x="576" y="556" width="1" height="14" fill="#ffffff" />
<rect x="577" y="555" width="1" height="15" fill="#ffffff" />
<rect x="5" y="557" width="571" height="12" fill="#008000" />
<text x="583.36" y="568" font-size="12" font-weight="400" fill="#000" textLength="28.81" lengthAdjust="spacingAndGlyphs">100%</text>
<rect x="781" y="561" width="2" height="2" fill="#a0a0a0" />
<rect x="777" y="565" width="2" height="2" fill="#a0a0a0" />
<rect x="781" y="565" width="2" height="2" fill="#a0a0a0" />
<rect x="773" y="569" width="2" height="2" fill="#a0a0a0" />
<rect x="777" y="569" width="2" height="2" fill="#a0a0a0" />
<rect x="781" y="569" width="2" height="2" fill="#a0a0a0" />
</svg>
</body></html>
